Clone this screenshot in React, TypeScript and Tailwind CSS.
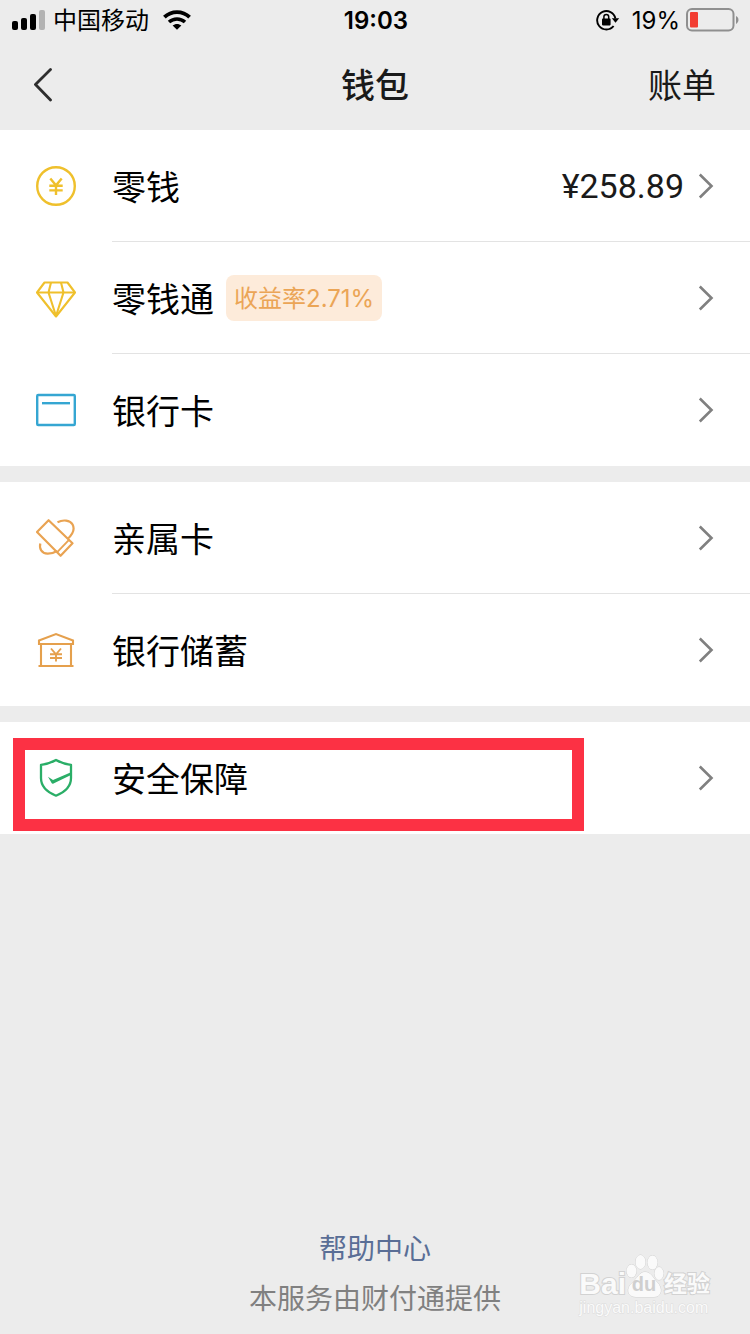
import type { ReactNode } from "react";

function SignalIcon() {
  return (
    <svg width="33" height="20" viewBox="0 0 33 20" aria-hidden="true">
      <rect x="0" y="11" width="6" height="9" rx="2" />
      <rect x="9" y="8" width="6" height="12" rx="2" />
      <rect x="18" y="4" width="6" height="16" rx="2" />
      <rect x="27" y="0" width="6" height="20" rx="2" fill="#b3b3b3" />
    </svg>
  );
}

function WifiIcon() {
  return (
    <svg width="28" height="20" viewBox="0 0 28 20" aria-hidden="true">
      <path d="M1.4 7.2C8.4 0.3 19.6 0.3 26.6 7.2" fill="none" stroke="#000" strokeWidth="3.8" />
      <path d="M6 12C10.6 7.9 17.4 7.9 22 12" fill="none" stroke="#000" strokeWidth="3.6" />
      <path d="M9.6 15.6C12.2 13.3 15.8 13.3 18.4 15.6L14 19.8Z" />
    </svg>
  );
}

function RotationLockIcon() {
  return (
    <svg width="24" height="22" viewBox="0 0 24 22" aria-hidden="true">
      <path d="M17.6 17A9.2 9.2 0 1 1 19.4 9.5" fill="none" stroke="#000" strokeWidth="1.9" />
      <path d="M15.8 9.2H23.2L19.5 13.8Z" />
      <rect x="6" y="9.6" width="8.6" height="6.8" rx="0.8" />
      <path d="M7.9 10V7.8a2.4 2.4 0 0 1 4.8 0V10" fill="none" stroke="#000" strokeWidth="1.5" />
    </svg>
  );
}

function BatteryIcon() {
  return (
    <svg width="54" height="24" viewBox="0 0 54 24" aria-hidden="true">
      <rect x="1" y="1" width="46.5" height="21.5" rx="5" fill="none" stroke="#8f8f8f" strokeWidth="2" />
      <rect x="4" y="4" width="8" height="15.5" rx="1" fill="#f23c31" />
      <path d="M50 8v8c3-1.5 3.6-6.5 0-8Z" fill="#8f8f8f" />
    </svg>
  );
}

function Chevron() {
  return (
    <svg width="16" height="26" viewBox="0 0 16 26" fill="none" stroke="#808080" strokeWidth="2.6" aria-hidden="true">
      <path d="M1.8 1.500L13.500 13L1.800 24.500" />
    </svg>
  );
}

function CoinIcon() {
  return (
    <svg width="40" height="40" viewBox="0 0 40 40" fill="none" stroke="#efc02c" strokeWidth="2.4" aria-hidden="true">
      <circle cx="20" cy="20" r="18.8" />
      <path d="M14.3 12.5L20 19.3L25.700 12.500M20 19V29M13.300 19.700H26.700M13.300 24.400H26.700" />
    </svg>
  );
}

function DiamondIcon() {
  return (
    <svg width="40" height="40" viewBox="0 0 40 40" fill="none" stroke="#efc02c" strokeWidth="2.1" strokeLinejoin="round" aria-hidden="true">
      <path d="M8.500 4.500H31.500L39 14.500L20 38.500L1 14.500Z" />
      <path d="M1 14.500H39M15 4.500L12.500 14.500L20 38L27.500 14.500L25 4.500" />
    </svg>
  );
}

function CardIcon() {
  return (
    <svg width="40" height="40" viewBox="0 0 40 40" fill="none" stroke="#35a6d2" strokeWidth="2.4" aria-hidden="true">
      <rect x="1.200" y="5" width="37.600" height="30" rx="1" />
      <path d="M6 13.200H34" />
    </svg>
  );
}

function FamilyCardIcon() {
  return (
    <svg width="40" height="40" viewBox="0 0 40 40" fill="none" stroke="#e9a352" strokeWidth="2.2" strokeLinejoin="round" aria-hidden="true">
      <path d="M12.600 2.200L36.500 25.200L24.600 37.800L1 14Z" />
      <path d="M33 21.800L21.200 34.200" strokeWidth="1.900" />
      <path d="M21.500 4.200C27 1.400 34 2 36.600 6.500C39 11.200 36.500 16.500 31.500 21" />
      <path d="M4.300 25.500C3 30.500 5.500 35.500 11.500 35.700C15 35.800 18.500 34.500 21 33" />
    </svg>
  );
}

function BankIcon() {
  return (
    <svg width="40" height="40" viewBox="0 0 40 40" fill="none" stroke="#e5a04d" strokeWidth="2.1" aria-hidden="true">
      <path d="M3 14V10.500L20 4L37 10.500V14Z" />
      <path d="M5 14V36M35 14V36M2.500 36H37.500" />
      <path d="M15 18.500L20 24.300L25 18.500M20 24V31.500M14 24.300H26M14 28H26" strokeWidth="1.900" />
    </svg>
  );
}

function ShieldIcon() {
  return (
    <svg width="40" height="40" viewBox="0 0 40 40" fill="none" stroke="#2aae67" strokeWidth="2.3" strokeLinejoin="round" aria-hidden="true">
      <path d="M20 2C25 4.800 30 6.300 35 6.800V20C35 28.500 28 34.500 20 37.700C12 34.500 5 28.500 5 20V6.800C10 6.300 15 4.800 20 2Z" />
      <path d="M12 18.700L17 22L35 14.300V16.900L17.500 25.500C16.600 25.900 16 25.600 15.600 25Z" fill="#2aae67" stroke="none" />
    </svg>
  );
}

type RowProps = { icon: ReactNode; label: string; tag?: string; value?: string; divider?: boolean };

function Row({ icon, label, tag, value, divider }: RowProps) {
  return (
    <li>
      <a href="#" className="flex h-28 items-stretch pl-9">
        <span className="flex w-[76px] shrink-0 items-center">{icon}</span>
        <span className={divider ? "flex flex-1 items-center border-b border-[#e3e3e3] pr-9" : "flex flex-1 items-center pr-9"}>
          <span className="pt-1 text-[34px] leading-[48px]">{label}</span>
          {tag && (
            <span className="ml-3 flex h-[46px] items-center rounded-lg bg-[#fdebda] px-2 pt-0.5 text-2xl text-[#eba556]">{tag}</span>
          )}
          <span className="ml-auto flex items-center gap-3.5">
            {value && <span className="font-[Roboto] text-[34px] leading-[48px] text-[#1a1a1a]">{value}</span>}
            <Chevron />
          </span>
        </span>
      </a>
    </li>
  );
}

function Watermark() {
  return (
    <div className="absolute right-10 bottom-4 flex flex-col items-start" aria-hidden="true">
      <div className="flex items-end font-bold text-[#fafafa] [paint-order:stroke_fill] [-webkit-text-stroke:2px_#d2d2d2]">
        <span className="font-['Liberation_Sans'] text-[30px] leading-7">Bai</span>
        <span className="relative flex h-11 w-9 items-end justify-center">
          <svg className="absolute inset-0" width="38" height="44" viewBox="0 0 38 44" fill="#fafafa" stroke="#d2d2d2" strokeWidth="1">
            <ellipse cx="5.500" cy="17" rx="5" ry="6.500" />
            <ellipse cx="14.500" cy="8" rx="5" ry="7" />
            <ellipse cx="26.500" cy="8.500" rx="5" ry="7" />
            <ellipse cx="33" cy="19.500" rx="4.500" ry="6.500" />
            <path d="M19 18C25 18 27 24 31 28C37 34 36 43 28 43C23 43 15 43 10 43C1 43 0 34 6 29C11 25 13 18 19 18Z" />
          </svg>
          <span className="relative font-['Liberation_Sans'] text-[20px] leading-7 text-[#cfcfcf] [-webkit-text-stroke:0px]">du</span>
        </span>
        <span className="ml-0.5 text-[23px] leading-7">经验</span>
      </div>
      <span className="font-['Liberation_Sans'] text-base leading-5 text-[#fafafa] [paint-order:stroke_fill] [-webkit-text-stroke:1px_#dcdcdc]">
        jingyan.baidu.com
      </span>
    </div>
  );
}

export default function App() {
  return (
    <div className="relative flex min-h-screen flex-col bg-[#ececec] font-['Inter','Noto_Sans_CJK_SC',sans-serif] text-black">
      <div className="grid h-10 grid-cols-[1fr_auto_1fr] items-center pr-2.5 pl-3 text-2xl">
        <div className="flex items-center gap-2">
          <SignalIcon />
          <span className="pt-0.5">中国移动</span>
          <span className="ml-1.5">
            <WifiIcon />
          </span>
        </div>
        <time className="pt-0.5 font-semibold">19:03</time>
        <div className="flex items-center justify-end gap-1.5">
          <RotationLockIcon />
          <span className="ml-1.5 pt-0.5">19%</span>
          <BatteryIcon />
        </div>
      </div>

      <header className="grid h-[90px] grid-cols-[1fr_auto_1fr] items-center px-[34px] text-[34px] text-[#1a1a1a]">
        <button type="button" aria-label="返回" className="justify-self-start">
          <svg width="20" height="36" viewBox="2 0 20 36" fill="none" stroke="#2e2e2e" strokeWidth="2.8" strokeLinecap="round">
            <path d="M18.500 2.500L3.500 17.500L18.500 33" />
          </svg>
        </button>
        <h1 className="font-medium">钱包</h1>
        <button type="button" className="justify-self-end">
          账单
        </button>
      </header>

      <main className="flex flex-col gap-4">
        <ul className="bg-white">
          <Row icon={<CoinIcon />} label="零钱" value="¥258.89" divider />
          <Row icon={<DiamondIcon />} label="零钱通" tag="收益率2.71%" divider />
          <Row icon={<CardIcon />} label="银行卡" />
        </ul>
        <ul className="bg-white">
          <Row icon={<FamilyCardIcon />} label="亲属卡" divider />
          <Row icon={<BankIcon />} label="银行储蓄" />
        </ul>
        <div className="relative">
          <ul className="bg-white">
            <Row icon={<ShieldIcon />} label="安全保障" />
          </ul>
          <div className="pointer-events-none absolute top-4 right-[166px] bottom-[3px] left-[13px] border-12 border-[#fc3144]" />
        </div>
      </main>

      <footer className="mt-auto flex flex-col items-center pb-2.5 text-[28px] leading-[50px]">
        <a href="#" className="text-[#5a6e96]">
          帮助中心
        </a>
        <p className="text-[#808080]">本服务由财付通提供</p>
      </footer>

      <Watermark />
    </div>
  );
}
